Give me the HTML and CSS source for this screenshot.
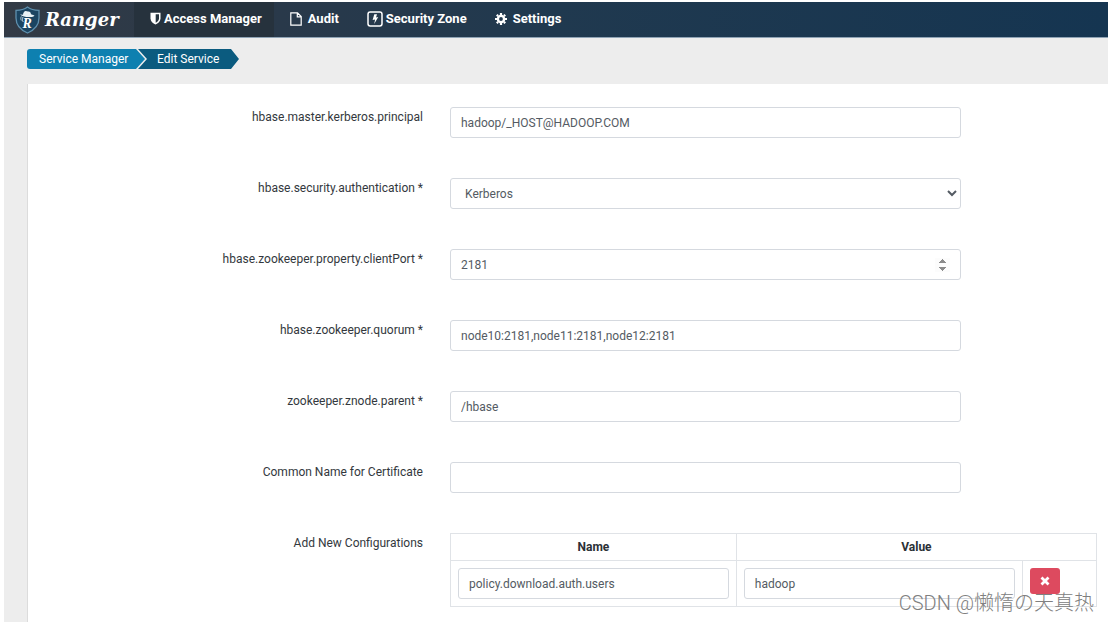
FILE: index.html
```html
<!DOCTYPE html>
<html lang="en">
<head>
<meta charset="utf-8">
<title>Ranger - Edit Service</title>
<link rel="stylesheet" href="styles.css">
</head>
<body>
<div class="app">
  <header class="topbar">
    <a class="brand" href="#">
      <svg class="brand-mark" viewBox="0 0 26 28" aria-hidden="true">
        <path d="M13 1C10 3.300 5.500 4.300 1.500 4.300V12c0 7 4.500 12 11.500 15 7-3 11.500-8 11.500-15V4.300C20.500 4.300 16 3.300 13 1z" fill="#1b4461" stroke="#5f90ae" stroke-width="1.300"/>
        <path d="M5.500 8.500l3 .2c.2-2 1.200-3.600 2.700-3.700 1-.1 1.500.6 2.400.5 1.900-.2 2.600.9 2.900 2.700l3.500 1.400c-.5.9-1.500 1.300-2.600 1.300-3.500.2-8.500.6-11.900-2.400z" fill="#e9f1f5"/>
        <path d="M8.500 11c-.8 2-.8 3.500.3 5M6.800 10.500c-.6 1.500-.6 2.600 0 4" fill="none" stroke="#b9d0dc" stroke-width="1"/>
        <text class="brand-letter" x="8" y="22">R</text>
      </svg>
      <span class="brand-name">Ranger</span>
    </a>
    <nav class="nav">
      <a class="nav-item is-active" href="#">
        <svg width="11" height="13" viewBox="0 0 11 13" aria-hidden="true"><path d="M.5.8h10v5.700c0 3-2.500 4.900-5 6-2.500-1.100-5-3-5-6z" fill="#fff"/><path d="M5.700 2.300H9v4.200c0 1.900-1.500 3.200-3.300 4.200z" fill="#26343f"/></svg>
        <span>Access Manager</span>
      </a>
      <a class="nav-item nav-audit" href="#">
        <svg width="12" height="14" viewBox="0 0 12 14" aria-hidden="true"><path d="M.8.800h6.700l3.700 3.700v8.700H.8zM7.300.800v4h4" fill="none" stroke="#fff" stroke-width="1.200"/></svg>
        <span>Audit</span>
      </a>
      <a class="nav-item" href="#">
        <svg width="16" height="16" viewBox="0 0 16 16" aria-hidden="true"><rect x="1" y="1" width="14" height="14" rx="2.200" fill="none" stroke="#fff" stroke-width="1.500"/><path d="M7.300 3.200h2.700L9 6.400l2.200-.4-4 7 .9-4.500-2.500.5z" fill="#fff"/></svg>
        <span>Security Zone</span>
      </a>
      <a class="nav-item nav-settings" href="#">
        <svg width="12" height="12" viewBox="0 0 12 12" aria-hidden="true"><circle cx="6" cy="6" r="3.100" fill="none" stroke="#fff" stroke-width="2.400"/><path d="M6 0v2M6 10v2M0 6h2M10 6h2M1.800 1.800l1.300 1.300M8.900 8.900l1.300 1.300M1.800 10.200l1.300-1.300M8.900 3.100l1.300-1.300" stroke="#fff" stroke-width="2.200"/></svg>
        <span>Settings</span>
      </a>
    </nav>
  </header>

  <nav class="crumbs" aria-label="Breadcrumb">
    <a class="crumb crumb-first" href="#">Service Manager</a>
    <a class="crumb crumb-last" href="#">Edit Service</a>
  </nav>

  <main class="panel">
    <form class="form">
      <div class="row">
        <label class="label" for="principal">hbase.master.kerberos.principal</label>
        <input class="control" id="principal" type="text" value="hadoop/_HOST@HADOOP.COM">
      </div>
      <div class="row">
        <label class="label" for="auth">hbase.security.authentication *</label>
        <select class="control control-select" id="auth"><option>Kerberos</option></select>
      </div>
      <div class="row">
        <label class="label" for="port">hbase.zookeeper.property.clientPort *</label>
        <input class="control" id="port" type="number" value="2181">
      </div>
      <div class="row">
        <label class="label" for="quorum">hbase.zookeeper.quorum *</label>
        <input class="control" id="quorum" type="text" value="node10:2181,node11:2181,node12:2181">
      </div>
      <div class="row">
        <label class="label" for="znode">zookeeper.znode.parent *</label>
        <input class="control" id="znode" type="text" value="/hbase">
      </div>
      <div class="row">
        <label class="label" for="cert">Common Name for Certificate</label>
        <input class="control" id="cert" type="text">
      </div>
      <div class="row">
        <span class="label" id="configs">Add New Configurations</span>
        <table class="configs" aria-labelledby="configs">
          <colgroup><col class="col-name"><col class="col-value"><col class="col-action"></colgroup>
          <thead>
            <tr><th>Name</th><th colspan="2">Value</th></tr>
          </thead>
          <tbody>
            <tr>
              <td><input class="control" type="text" aria-label="Name" value="policy.download.auth.users"></td>
              <td><input class="control" type="text" aria-label="Value" value="hadoop"></td>
              <td>
                <button class="remove" type="button" aria-label="Remove">
                  <svg width="10" height="10" viewBox="0 0 10 10" aria-hidden="true"><path d="M1.500 1.500l7 7M8.500 1.500l-7 7" stroke="#fff" stroke-width="2.800"/></svg>
                </button>
              </td>
            </tr>
          </tbody>
        </table>
      </div>
    </form>
  </main>
  <div class="watermark">CSDN @懒惰の天真热</div>
</div>
</body>
</html>
```
FILE: styles.css
```css
* {
  box-sizing: border-box;
}

body {
  margin: 0;
  background: #fff;
  color: #33383d;
  font-family: Roboto, "Liberation Sans", sans-serif;
  font-size: 12px;
  line-height: 20px;
}

a {
  color: inherit;
  text-decoration: none;
}

.app {
  position: relative;
  display: flex;
  flex-direction: column;
  min-height: 100vh;
  padding: 2px 0 0 4px;
  background: #ededed content-box;
}

.topbar {
  display: flex;
  height: 36px;
  border-bottom: 1px solid #8fa3b5;
  background: linear-gradient(to right, #323a45, #29394a 25%, #20394f 50%, #153551);
  color: #fff;
}

.brand {
  display: flex;
  align-items: center;
  gap: 4px;
  width: 130px;
  padding-left: 10px;
}

.brand-mark {
  width: 27px;
  height: 28px;
}

.brand-letter {
  fill: #fff;
  font: italic bold 14px "Liberation Serif", serif;
}

.brand-name {
  font: italic bold 18px "DejaVu Serif", serif;
}

.nav {
  display: flex;
  font-size: 13px;
}

.nav-item {
  display: flex;
  align-items: center;
  gap: 3px;
  padding: 0 12px 2px 16px;
  font-weight: 700;
}

.nav-item.is-active {
  background: #26323d;
}

.nav-audit,
.nav-settings {
  gap: 6px;
}

.crumbs {
  display: flex;
  padding: 11px 0 15px 23px;
  color: #fff;
}

.crumb {
  height: 20px;
}

.crumb-first {
  width: 118px;
  padding-left: 12px;
  border-radius: 3px 0 0 3px;
  background: #0e80b0;
  clip-path: polygon(0 0, 109px 0, 100% 50%, 109px 100%, 0 100%);
}

.crumb-last {
  width: 101px;
  margin-left: -7px;
  padding-left: 19px;
  background: #0b5b7f;
  clip-path: polygon(0 0, 93px 0, 100% 50%, 93px 100%, 0 100%, 9px 50%);
}

.panel {
  flex: 1;
  margin-left: 23px;
  padding: 23px 11px 16px 0;
  border-left: 1px solid #dcdcdc;
  background: #fff;
}

.form {
  display: flex;
  flex-direction: column;
  gap: 40px;
}

.row {
  display: grid;
  grid-template-columns: 395fr 511fr 109fr;
  column-gap: 27px;
}

.label {
  text-align: right;
}

.control {
  width: 100%;
  height: 31px;
  padding: 0 10px;
  border: 1px solid #d5d9df;
  border-radius: 3px;
  background: #fff;
  color: #545b63;
  font: inherit;
}

.control::-webkit-inner-spin-button {
  opacity: 1;
}

.configs {
  grid-column: 2 / 4;
  width: 100%;
  border-collapse: collapse;
  table-layout: fixed;
}

.configs th,
.configs td {
  padding: 7px;
  border: 1px solid #e0e3e7;
  vertical-align: top;
}

.configs th {
  height: 27px;
  padding: 3px;
  color: #2b3036;
  font-weight: 700;
}

.col-name,
.col-value {
  width: 44.25%;
}

.control-select {
  padding-right: 0;
}

.remove {
  display: flex;
  align-items: center;
  justify-content: center;
  width: 30px;
  height: 26px;
  border: 0;
  border-radius: 3px;
  background: #dd4a5f;
}

.watermark {
  position: absolute;
  right: 14px;
  bottom: 6px;
  color: #808080;
  font: 300 20px/28px Roboto, "Noto Sans CJK SC", sans-serif;
}
```
